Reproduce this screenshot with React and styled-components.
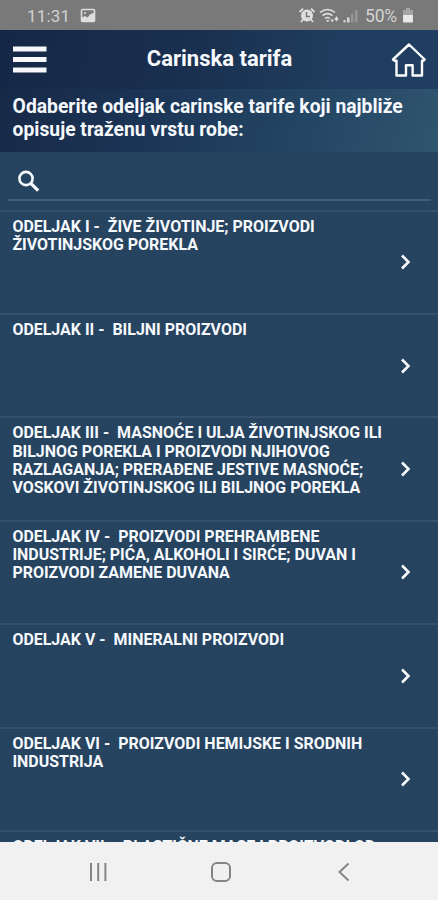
import styled, { createGlobalStyle } from "styled-components";

const GlobalStyle = createGlobalStyle`
  * {
    box-sizing: border-box;
  }

  body {
    margin: 0;
    font-family: Roboto, "Liberation Sans", sans-serif;
  }
`;

const Screen = styled.div`
  width: 438px;
  height: 900px;
  display: flex;
  flex-direction: column;
  overflow: hidden;
  background: #26435f;
  color: #f6f9fd;
`;

const StatusBar = styled.div`
  flex: none;
  height: 30px;
  display: flex;
  align-items: center;
  justify-content: space-between;
  padding: 1px 25px 0 27px;
  background: #797979;
  color: #d2d2d2;
  font-size: 17px;

  .group {
    display: flex;
    align-items: center;
  }

  .time {
    width: 53px;
    letter-spacing: 0.2px;
  }

  .battery {
    width: 38px;
    margin-left: 5px;
    font-size: 17.5px;
    letter-spacing: -0.2px;
  }

  svg {
    display: block;
  }
`;

const Header = styled.header`
  flex: none;
  height: 59px;
  display: flex;
  align-items: center;
  justify-content: space-between;
  padding: 0 11px 0 13px;
  background: linear-gradient(100deg, #152747 0%, #1a3050 45%, #1f3d5e 75%, #203e5f 100%);

  h1 {
    margin: 0;
    padding: 0 0 1px 1px;
    font-size: 22px;
    font-weight: 700;
    line-height: 26px;
  }

  svg {
    display: block;
  }
`;

const Intro = styled.div`
  flex: none;
  height: 63px;
  padding: 6px 12.6px;
  background: linear-gradient(105deg, #172947 0%, #1b3354 30%, #244665 70%, #30556f 100%);
  font-size: 19.3px;
  font-weight: 700;
  line-height: 23px;
  white-space: pre-line;
`;

const SearchField = styled.div`
  flex: none;
  height: 49px;
  margin: 0 7px 8.6px 8px;
  padding: 17px 0 0 9px;
  border-bottom: 2px solid #405d79;

  svg {
    display: block;
  }
`;

const List = styled.div`
  flex: 1;
  min-height: 0;
  overflow: hidden;
`;

const Row = styled.div`
  height: 103.4px;
  display: flex;
  align-items: center;
  justify-content: space-between;
  padding: 0 26px 0 12.4px;
  border-top: 2px solid #33506d;

  .title {
    align-self: flex-start;
    padding-top: 6px;
    font-size: 15.96px;
    font-weight: 700;
    line-height: 18.3px;
    white-space: pre;
  }

  svg {
    flex: none;
    display: block;
  }
`;

const NavBar = styled.nav`
  flex: none;
  height: 58px;
  display: flex;
  align-items: center;
  justify-content: space-between;
  padding: 2px 87px 0 88px;
  background: #f1f1f1;

  svg {
    display: block;
  }
`;

const sections = [
  "ODELJAK I -  ŽIVE ŽIVOTINJE; PROIZVODI\nŽIVOTINJSKOG POREKLA",
  "ODELJAK II -  BILJNI PROIZVODI",
  "ODELJAK III -  MASNOĆE I ULJA ŽIVOTINJSKOG ILI\nBILJNOG POREKLA I PROIZVODI NJIHOVOG\nRAZLAGANJA; PRERAĐENE JESTIVE MASNOĆE;\nVOSKOVI ŽIVOTINJSKOG ILI BILJNOG POREKLA",
  "ODELJAK IV -  PROIZVODI PREHRAMBENE\nINDUSTRIJE; PIĆA, ALKOHOLI I SIRĆE; DUVAN I\nPROIZVODI ZAMENE DUVANA",
  "ODELJAK V -  MINERALNI PROIZVODI",
  "ODELJAK VI -  PROIZVODI HEMIJSKE I SRODNIH\nINDUSTRIJA",
  "ODELJAK VII -  PLASTIČNE MASE I PROIZVODI OD",
];

const PictureIcon = () => (
  <svg width="16" height="15" viewBox="0 0 16 15">
    <rect x="1.5" y="1.5" width="13" height="12" rx="1" fill="none" stroke="#dedede" strokeWidth="1.6" />
    <path d="M2 13V9.500l3-1.500 2.500 1.500L10.500 6l3.500-1v8z" fill="#dedede" />
    <circle cx="5" cy="5" r="1" fill="#dedede" />
  </svg>
);

const StatusIcons = () => (
  <svg width="62" height="17" viewBox="0 0 62 17">
    <circle cx="9" cy="8.5" r="6" fill="#dedede" />
    <path d="M8.500 5v4.500H12" fill="none" stroke="#797979" strokeWidth="1.500" />
    <g fill="none" stroke="#dedede">
      <path d="M1.500 5l3.500-3.300M16.500 5L13 1.700M5 12.500l-2 2.500M13 12.500l2 2.500" strokeWidth="1.800" />
      <path d="M22 5.500q7.500-6 15 0M24.500 8.600q5-4 10 0M27 11.500q2.500-2 5 0" strokeWidth="1.600" />
    </g>
    <path d="M28 13h3.500l-1.700 2.200zM32.500 12.500H36L34.200 15.500zM36.500 12l2-3 2 3-2 2.500z" fill="#dedede" />
    <path d="M45.500 13h2v2.500h-2zM49 10.500h2.500v5H49z" fill="#d8d8d8" />
    <path d="M53 7h2.500v8.500H53zM57 3h2.500v12.500H57z" fill="#969696" />
  </svg>
);

const BatteryIcon = () => (
  <svg width="10" height="15" viewBox="0 0 10 15">
    <path d="M3 0h4v2h3v5H0V2h3z" fill="#a5a5a5" />
    <path d="M0 7h10v6.500q0 1-1 1H1q-1 0-1-1z" fill="#e8e8e8" />
  </svg>
);

const MenuIcon = () => (
  <svg width="34" height="27" viewBox="0 0 34 27">
    <path d="M0 3h33.500M0 13.500h33.500M0 24h33.500" stroke="#f6f8fc" strokeWidth="4.800" />
  </svg>
);

const HomeIcon = () => (
  <svg width="36" height="36" viewBox="0 0 36 36">
    <path
      d="M18 2.500L33.700 17.500L32.500 18.700H31V33.500H21.600V23.300H15V33.500H5.500V18.700H3.500L2 17.500Z"
      fill="none"
      stroke="#fbfdff"
      strokeWidth="2.400"
      strokeLinejoin="round"
    />
  </svg>
);

const SearchIcon = () => (
  <svg width="24" height="24" viewBox="0 0 24 24">
    <circle cx="9" cy="9.500" r="6.600" fill="none" stroke="#f6f9fd" strokeWidth="2.600" />
    <path d="M13.800 14.300L21.200 21.700" stroke="#f6f9fd" strokeWidth="3.300" />
  </svg>
);

const Chevron = () => (
  <svg width="14" height="18" viewBox="0 0 14 18">
    <path d="M4 2.500L10.500 9L4 15.500" fill="none" stroke="#f6f9fd" strokeWidth="2.600" />
  </svg>
);

const App = () => {
  return (
    <>
      <GlobalStyle />
      <Screen>
        <StatusBar>
          <div className="group">
            <span className="time">11:31</span>
            <PictureIcon />
          </div>
          <div className="group">
            <StatusIcons />
            <span className="battery">50%</span>
            <BatteryIcon />
          </div>
        </StatusBar>
        <Header>
          <MenuIcon />
          <h1>Carinska tarifa</h1>
          <HomeIcon />
        </Header>
        <Intro>{"Odaberite odeljak carinske tarife koji najbliže\nopisuje traženu vrstu robe:"}</Intro>
        <SearchField>
          <SearchIcon />
        </SearchField>
        <List>
          {sections.map((title, key) => (
            <Row key={key}>
              <span className="title">{title}</span>
              <Chevron />
            </Row>
          ))}
        </List>
        <NavBar>
          <svg width="20" height="20" viewBox="0 0 20 20">
            <path d="M3 1v18M10.200 1v18M17.400 1v18" stroke="#858585" strokeWidth="2" />
          </svg>
          <svg width="22" height="22" viewBox="0 0 22 22">
            <rect x="2" y="2" width="18" height="18" rx="5" fill="none" stroke="#858585" strokeWidth="2" />
          </svg>
          <svg width="18" height="20" viewBox="0 0 18 20">
            <path d="M15.500 1.500L6.500 10L15.500 18.500" fill="none" stroke="#858585" strokeWidth="2" />
          </svg>
        </NavBar>
      </Screen>
    </>
  );
};

export default App;
